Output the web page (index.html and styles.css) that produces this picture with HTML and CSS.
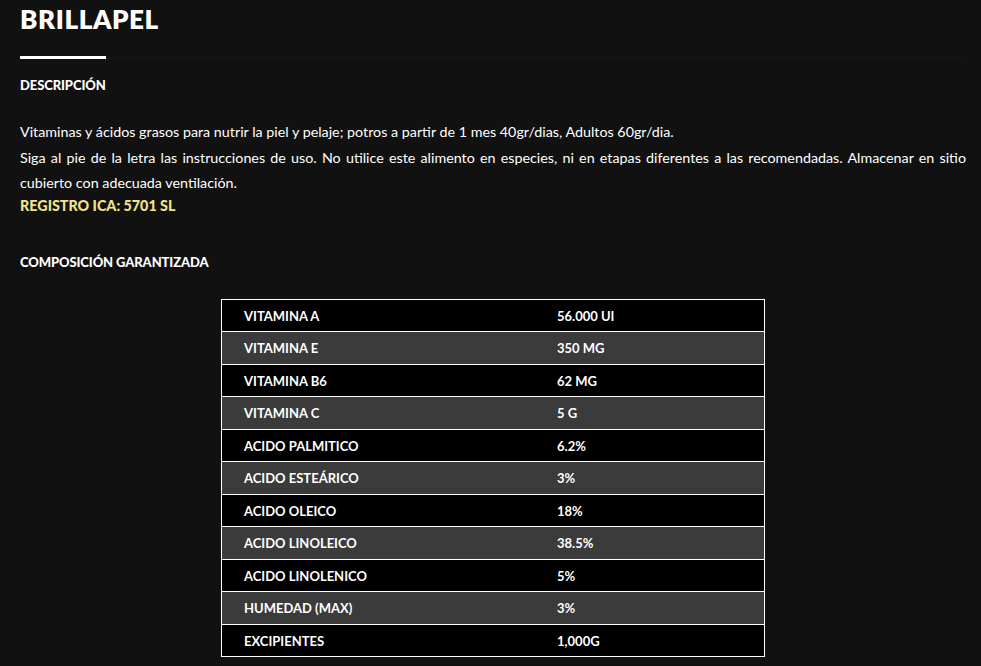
FILE: index.html
```html
<!DOCTYPE html>
<html lang="es">
<head>
<meta charset="utf-8">
<title>BRILLAPEL</title>
<link rel="stylesheet" href="styles.css">
</head>
<body>
<main class="page">
  <h1 class="title">BRILLAPEL</h1>
  <div class="divider"><span class="divider-bar"></span></div>
  <h2 class="section-head">DESCRIPCIÓN</h2>
  <div class="desc">
    <p>Vitaminas y ácidos grasos para nutrir la piel y pelaje; potros a partir de 1 mes 40gr/dias, Adultos 60gr/dia.</p>
    <p class="justify">Siga al pie de la letra las instrucciones de uso. No utilice este alimento en especies, ni en etapas diferentes a las recomendadas. Almacenar en sitio cubierto con adecuada ventilación.</p>
    <p class="registro">REGISTRO ICA: 5701 SL</p>
  </div>
  <h2 class="section-head comp">COMPOSICIÓN GARANTIZADA</h2>
  <table class="comp-table">
    <tbody>
      <tr><td>VITAMINA A</td><td>56.000 UI</td></tr>
      <tr><td>VITAMINA E</td><td>350 MG</td></tr>
      <tr><td>VITAMINA B6</td><td>62 MG</td></tr>
      <tr><td>VITAMINA C</td><td>5 G</td></tr>
      <tr><td>ACIDO PALMITICO</td><td>6.2%</td></tr>
      <tr><td>ACIDO ESTEÁRICO</td><td>3%</td></tr>
      <tr><td>ACIDO OLEICO</td><td>18%</td></tr>
      <tr><td>ACIDO LINOLEICO</td><td>38.5%</td></tr>
      <tr><td>ACIDO LINOLENICO</td><td>5%</td></tr>
      <tr><td>HUMEDAD (MAX)</td><td>3%</td></tr>
      <tr><td>EXCIPIENTES</td><td>1,000G</td></tr>
    </tbody>
  </table>
</main>
</body>
</html>
```
FILE: styles.css
```css
html, body {
  margin: 0;
  padding: 0;
  background: #111111;
  color: #ffffff;
  font-family: Lato, "Open Sans", "Liberation Sans", sans-serif;
}

.page {
  padding: 0 15px 0 20px;
}

.title {
  margin: 0;
  padding-top: 4px;
  font-size: 26px;
  line-height: 30px;
  font-weight: 800;
  letter-spacing: 0.6px;
}

.divider {
  margin-top: 22px;
  height: 3px;
  display: flex;
  align-items: center;
}

.divider::after {
  content: "";
  flex: 1;
  height: 1px;
  background: #161616;
}

.divider-bar {
  width: 86px;
  height: 3px;
  background: #ffffff;
}

.section-head {
  margin: 18px 0 0;
  font-size: 13px;
  line-height: 16px;
  font-weight: 900;
  letter-spacing: -0.1px;
}

.desc {
  margin-top: 26px;
  font-size: 14.3px;
  line-height: 25.5px;
}

.desc p {
  margin: 0;
}

.justify {
  text-align: justify;
}

.registro {
  color: #f2e38a;
  font-weight: 900;
  line-height: 20px;
}

.section-head.comp {
  margin-top: 38px;
}

.comp-table {
  width: 544px;
  margin: 29px auto 0;
  border-collapse: collapse;
  border: 1px solid #ffffff;
  font-size: 13px;
  font-weight: 700;
}

.comp-table td {
  border-top: 1px solid #ffffff;
  padding: 8px 0 7px 22px;
  line-height: 16.5px;
}

.comp-table td:first-child {
  width: 291px;
}

.comp-table tr:nth-child(odd) {
  background: #000000;
}

.comp-table tr:nth-child(even) {
  background: #3b3b3b;
}
```
